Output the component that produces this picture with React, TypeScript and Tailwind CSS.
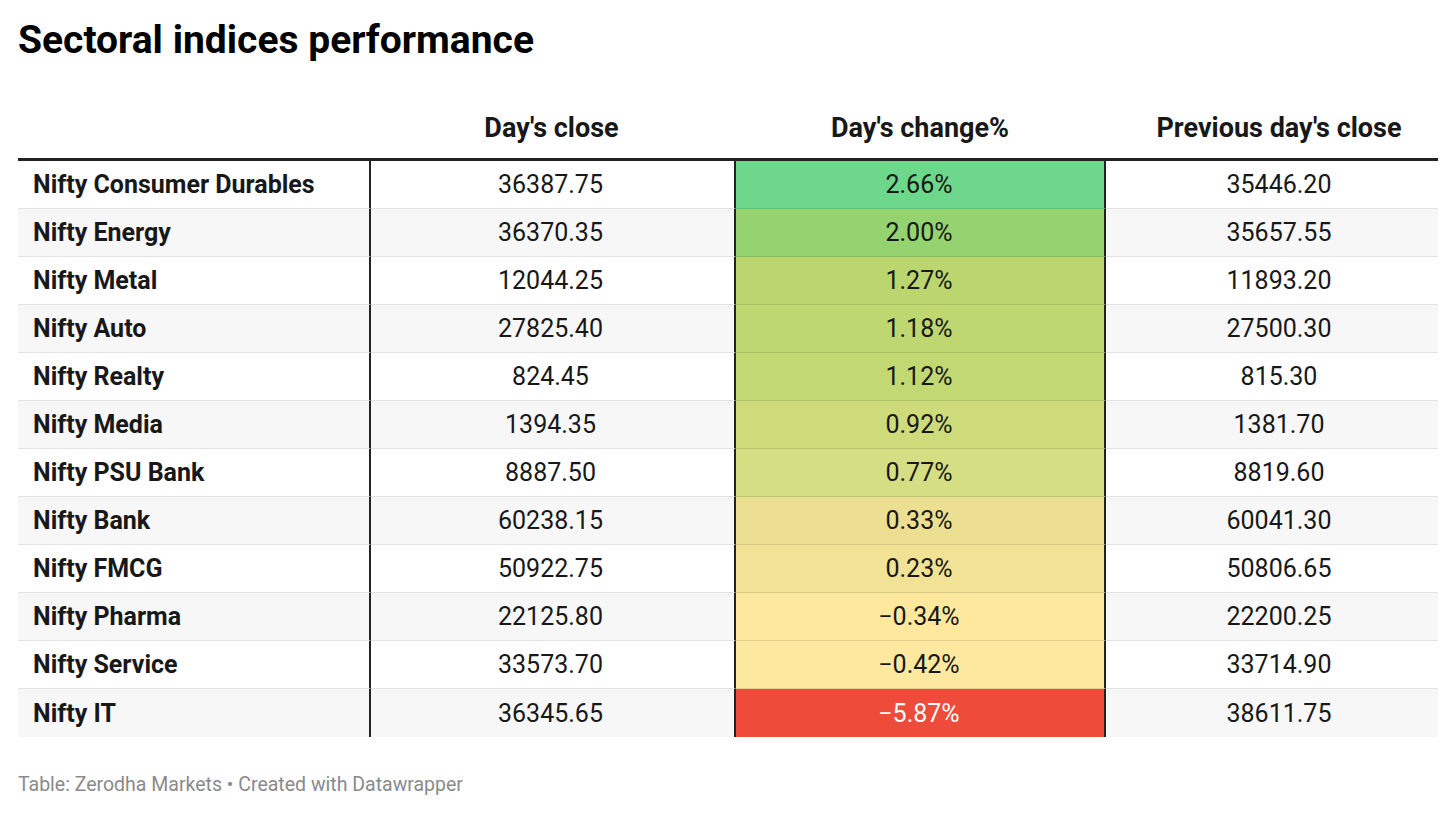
const rows = [
  { name: 'Nifty Consumer Durables', close: '36387.75', change: '2.66%', prev: '35446.20', bg: 'bg-[#6dd78b]', light: false },
  { name: 'Nifty Energy', close: '36370.35', change: '2.00%', prev: '35657.55', bg: 'bg-[#94d36f]', light: false },
  { name: 'Nifty Metal', close: '12044.25', change: '1.27%', prev: '11893.20', bg: 'bg-[#bbd66e]', light: false },
  { name: 'Nifty Auto', close: '27825.40', change: '1.18%', prev: '27500.30', bg: 'bg-[#bfd771]', light: false },
  { name: 'Nifty Realty', close: '824.45', change: '1.12%', prev: '815.30', bg: 'bg-[#c2d873]', light: false },
  { name: 'Nifty Media', close: '1394.35', change: '0.92%', prev: '1381.70', bg: 'bg-[#cddb7b]', light: false },
  { name: 'Nifty PSU Bank', close: '8887.50', change: '0.77%', prev: '8819.60', bg: 'bg-[#d5de83]', light: false },
  { name: 'Nifty Bank', close: '60238.15', change: '0.33%', prev: '60041.30', bg: 'bg-[#eddf91]', light: false },
  { name: 'Nifty FMCG', close: '50922.75', change: '0.23%', prev: '50806.65', bg: 'bg-[#f1e295]', light: false },
  { name: 'Nifty Pharma', close: '22125.80', change: '\u22120.34%', prev: '22200.25', bg: 'bg-[#fde89e]', light: false },
  { name: 'Nifty Service', close: '33573.70', change: '\u22120.42%', prev: '33714.90', bg: 'bg-[#fde89f]', light: false },
  { name: 'Nifty IT', close: '36345.65', change: '\u22125.87%', prev: '38611.75', bg: 'bg-[#ee4b3b]', light: true },
];

export default function App() {
  return (
    <div className="w-[1456px] h-[813px] bg-white font-['Roboto',sans-serif] text-[#181818] px-[18px] pt-[13px]">
      <h1 className="text-[39px] font-bold leading-[54px] text-black">Sectoral indices performance</h1>

      <div className="mt-[34px] w-[1420px]">
        {/* header */}
        <div className="flex h-[60px] items-end pb-[16px] border-b-[3px] border-[#222] text-[27px] font-bold leading-none text-[#181818]">
          <div className="w-[353px]" />
          <div className="w-[365px] text-center pr-[4px]">Day's close</div>
          <div className="w-[370px] text-center pr-[2px]">Day's change%</div>
          <div className="w-[332px] text-center pl-[14px]">Previous day's close</div>
        </div>

        {rows.map((r, i) => {
          const last = i === rows.length - 1;
          const stripe = i % 2 === 1 ? 'bg-[#f7f7f7]' : 'bg-white';
          const bb = last ? '' : 'border-b border-[#e2e2e2]';
          return (
            <div key={r.name} className={`flex h-[48px] text-[25px] leading-none ${stripe}`}>
              <div className={`w-[353px] flex items-center pl-[15px] font-bold border-r-2 border-r-[#222] ${bb}`}>
                {r.name}
              </div>
              <div className={`w-[365px] flex items-center justify-center pr-[4px] border-r-2 border-r-[#222] ${bb}`}>
                {r.close}
              </div>
              <div
                className={`w-[370px] flex items-center justify-center pr-[2px] border-r-2 border-r-[#222] ${r.bg} ${
                  last ? '' : 'border-b border-b-black/10'
                } ${r.light ? 'text-white' : ''}`}
              >
                {r.change}
              </div>
              <div className={`w-[332px] flex items-center justify-center pl-[14px] ${bb}`}>{r.prev}</div>
            </div>
          );
        })}
      </div>

      <div className="mt-[38px] text-[19.5px] leading-none text-[#8a8a8a]">
        Table: Zerodha Markets • Created with Datawrapper
      </div>
    </div>
  );
}
